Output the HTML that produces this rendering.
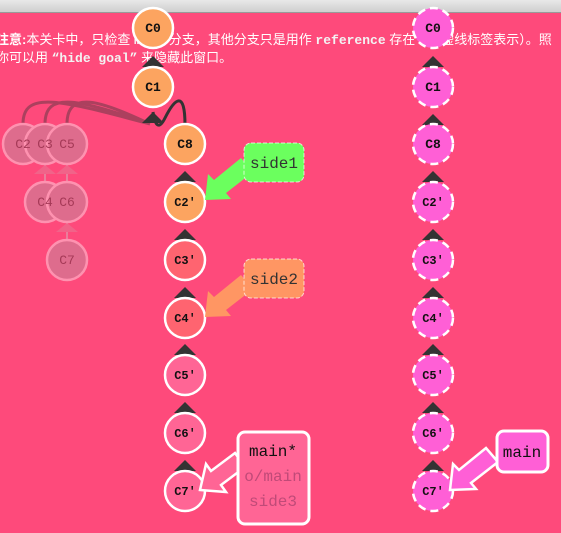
<!DOCTYPE html>
<html><head><meta charset="utf-8"><style>
html,body{margin:0;padding:0;width:561px;height:533px;overflow:hidden;background:#fe4a7b;font-family:"Liberation Sans","Noto Sans CJK SC",sans-serif}
#bar{position:absolute;left:0;top:0;width:561px;height:12px;background:linear-gradient(#e8e8e8,#cfcfcf);border-bottom:1px solid #999}
#t{position:absolute;top:31px;color:#fff;font-size:13px;line-height:17px;white-space:nowrap;left:-4px}
#t b{font-weight:bold}
#t code{font-family:"Liberation Mono",monospace;font-weight:bold;color:#f3f3f3}
svg{position:absolute;left:0;top:0}
</style></head><body>
<div id="bar"></div>
<div id="t"><b>注意:</b>本关卡中，只检查 <code>main</code> 分支，其他分支只是用作 <code>reference</code> 存在（以虚线标签表示）。照<br>你可以用 <code>“hide goal”</code> 来隐藏此窗口。</div>
<svg width="561" height="533" font-family="Liberation Mono,monospace" font-size="13" font-weight="bold" text-anchor="middle">
<g opacity="0.4">
<path d="M23,124 C23,90 60,100 150,124 M45,124 C45,90 80,100 150,124 M67,124 C67,90 100,100 150,124" fill="none" stroke="#333" stroke-width="3"/>
<path d="M45,164 L45,182 M67,164 L67,182 M67,222 L67,240" stroke="#ccc" stroke-width="2"/>
<g fill="#e08aa0"><polygon points="45,165 34,174 56,174"/><polygon points="67,165 56,174 78,174"/><polygon points="67,223 56,232 78,232"/></g>
<g stroke="#fff" stroke-width="2.5" fill="#b0a0a8">
<circle cx="23" cy="144" r="20"/><circle cx="45" cy="144" r="20"/><circle cx="67" cy="144" r="20"/>
<circle cx="45" cy="202" r="20"/><circle cx="67" cy="202" r="20"/><circle cx="67" cy="260" r="20"/>
</g>
<g fill="#222" font-weight="normal"><text x="23" y="148">C2</text><text x="45" y="148">C3</text><text x="67" y="148">C5</text><text x="45" y="206">C4</text><text x="67" y="206">C6</text><text x="67" y="264">C7</text></g>
</g>
<path d="M185,125 C185,90 175,98 165,118 C159,130 155,126 153,112" fill="none" stroke="#333" stroke-width="3"/>
<g fill="#333">
<polygon points="153,56 142,67 164,67"/><polygon points="153,112 142,123 164,123"/>
<polygon points="185,171 174,182 196,182"/><polygon points="185,229 174,240 196,240"/><polygon points="185,287 174,298 196,298"/><polygon points="185,344 174,355 196,355"/><polygon points="185,402 174,413 196,413"/><polygon points="185,460 174,471 196,471"/>
<polygon points="433,56 422,67 444,67"/><polygon points="433,114 422,125 444,125"/><polygon points="433,171 422,182 444,182"/><polygon points="433,229 422,240 444,240"/><polygon points="433,287 422,298 444,298"/><polygon points="433,344 422,355 444,355"/><polygon points="433,402 422,413 444,413"/><polygon points="433,460 422,471 444,471"/>
</g>
<g stroke="#fff" stroke-width="2.5">
<circle cx="153" cy="28" r="20" fill="#fca460"/><circle cx="153" cy="87" r="20" fill="#fca460"/>
<circle cx="185" cy="144" r="20" fill="#fca460"/><circle cx="185" cy="202" r="20" fill="#fca460"/>
<circle cx="185" cy="260" r="20" fill="#ff6470"/><circle cx="185" cy="318" r="20" fill="#ff6470"/>
<circle cx="185" cy="375" r="20" fill="#ff6595"/><circle cx="185" cy="433" r="20" fill="#ff6595"/><circle cx="185" cy="491" r="20" fill="#ff6595"/>
</g>
<g stroke="#fff" stroke-width="2.5" stroke-dasharray="8,5" fill="#ff5fd6">
<circle cx="433" cy="28" r="20"/><circle cx="433" cy="87" r="20"/><circle cx="433" cy="144" r="20"/><circle cx="433" cy="202" r="20"/><circle cx="433" cy="260" r="20"/><circle cx="433" cy="318" r="20"/><circle cx="433" cy="375" r="20"/><circle cx="433" cy="433" r="20"/><circle cx="433" cy="491" r="20"/>
</g>
<g fill="#111">
<text x="153" y="32">C0</text><text x="153" y="91">C1</text><text x="185" y="148">C8</text><text x="185" y="206" font-size="12">C2'</text><text x="185" y="264" font-size="12">C3'</text><text x="185" y="322" font-size="12">C4'</text><text x="185" y="379" font-size="12">C5'</text><text x="185" y="437" font-size="12">C6'</text><text x="185" y="495" font-size="12">C7'</text>
<text x="433" y="32">C0</text><text x="433" y="91">C1</text><text x="433" y="148">C8</text><text x="433" y="206" font-size="12">C2'</text><text x="433" y="264" font-size="12">C3'</text><text x="433" y="322" font-size="12">C4'</text><text x="433" y="379" font-size="12">C5'</text><text x="433" y="437" font-size="12">C6'</text><text x="433" y="495" font-size="12">C7'</text>
</g>
<polygon points="253,172 226,193 231,199 205,200 208,174 214,180 241,158" fill="#6bff5e"/>
<rect x="244" y="143" width="60" height="39" rx="7" fill="#6bff5e" stroke="#fff" stroke-width="1" stroke-dasharray="4,2" stroke-opacity="0.7"/>
<polygon points="253,289 226,310 231,316 205,317 208,291 214,297 241,275" fill="#ff9663"/>
<rect x="244" y="259" width="60" height="39" rx="7" fill="#ff9663" stroke="#fff" stroke-width="1" stroke-dasharray="4,2" stroke-opacity="0.7"/>
<polygon points="245,467 221,485 226,492 200,490 206,464 211,471 235,453" fill="#ff6595" stroke="#fff" stroke-width="2.5"/>
<rect x="238" y="432" width="71" height="92" rx="7" fill="#ff6595" stroke="#fff" stroke-width="3"/>
<polygon points="498,462 471,483 476,489 450,490 453,464 459,470 486,448" fill="#ff5fd6" stroke="#fff" stroke-width="2.5"/>
<rect x="497" y="431" width="51" height="41" rx="7" fill="#ff5fd6" stroke="#fff" stroke-width="3"/>
<g font-size="16" font-weight="normal">
<text x="274" y="168" fill="#333">side1</text>
<text x="274" y="284" fill="#333">side2</text>
<text x="273" y="456" fill="#111">main*</text>
<text x="273" y="481" fill="#c04a78">o/main</text>
<text x="273" y="506" fill="#c04a78">side3</text>
<text x="522" y="457" fill="#111">main</text>
</g>
</svg>
</body></html>
